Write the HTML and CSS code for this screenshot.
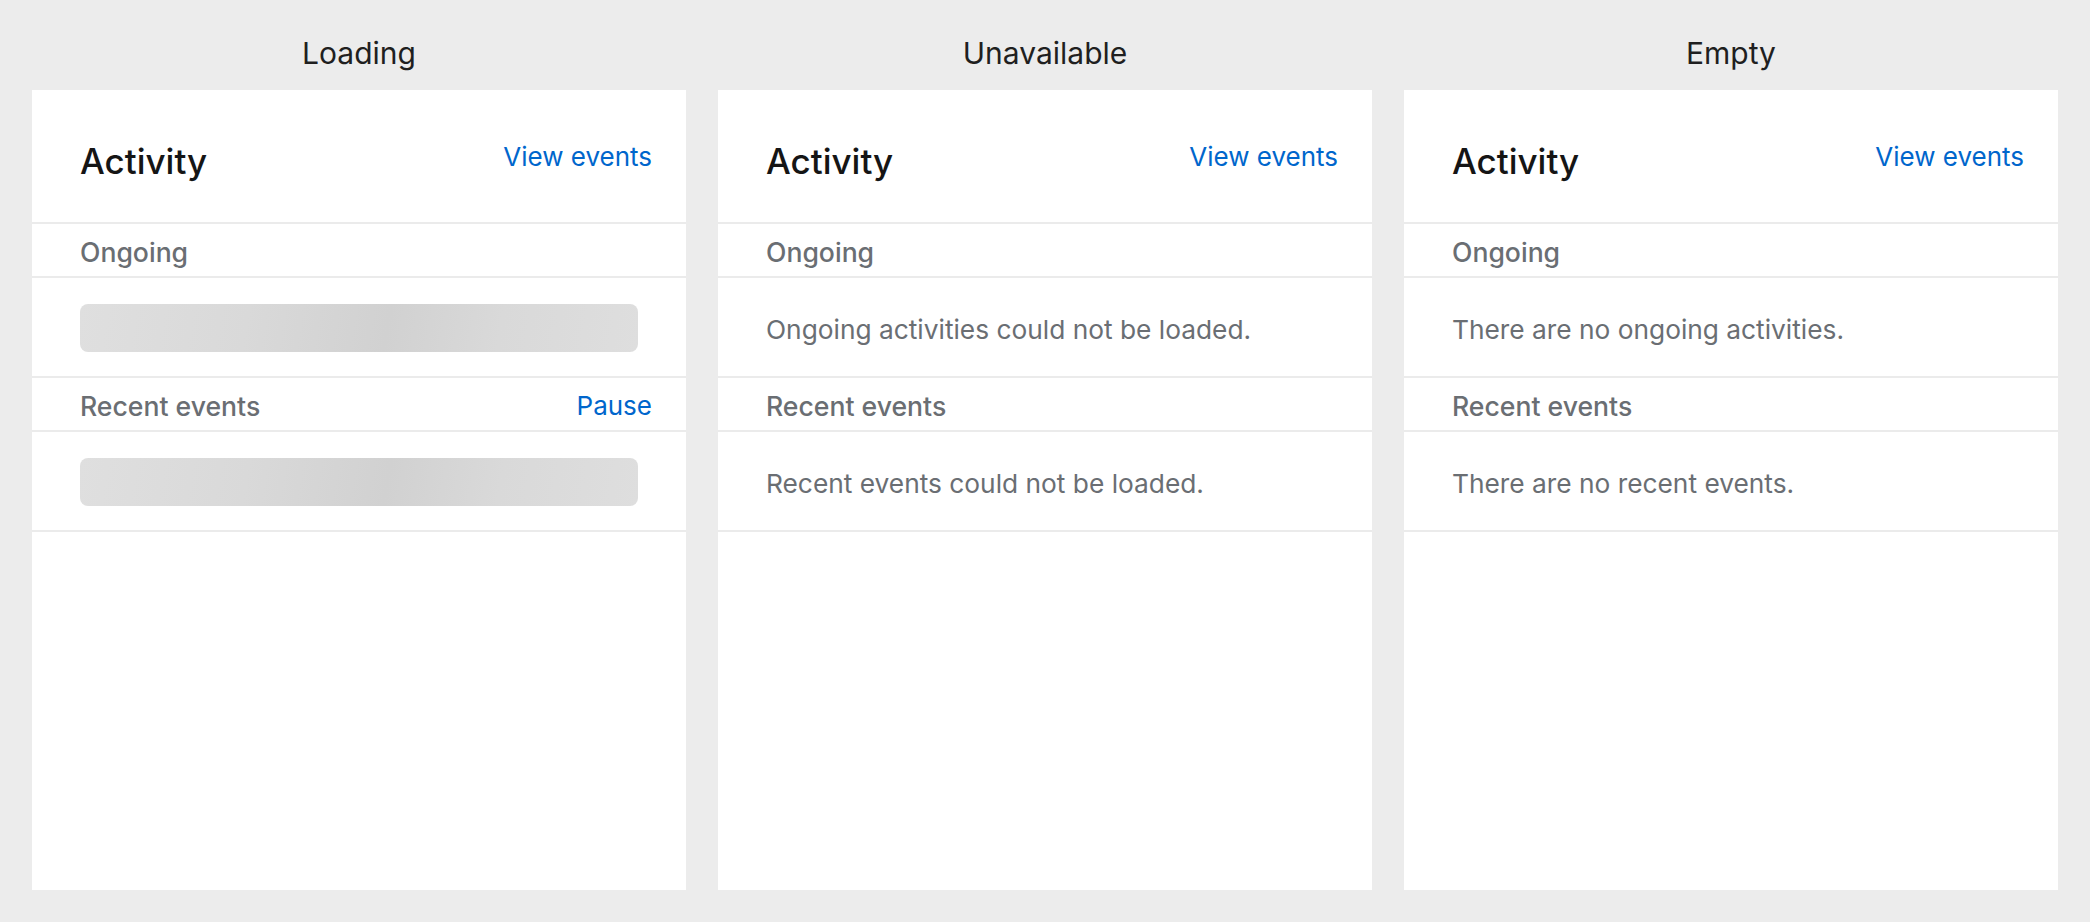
FILE: index.html
```html
<!DOCTYPE html>
<html lang="en">
<head>
<meta charset="utf-8">
<title>Activity card states</title>
<link rel="stylesheet" href="styles.css">
</head>
<body>
<main class="board">
  <section class="column">
    <h2 class="state-title">Loading</h2>
    <div class="card">
      <header class="card-header">
        <h3 class="card-title">Activity</h3>
        <a class="link" href="#">View events</a>
      </header>
      <div class="section-label">
        <span>Ongoing</span>
      </div>
      <div class="section-body skeleton-row">
        <div class="skeleton"></div>
      </div>
      <div class="section-label">
        <span>Recent events</span>
        <a class="link" href="#">Pause</a>
      </div>
      <div class="section-body skeleton-row">
        <div class="skeleton"></div>
      </div>
    </div>
  </section>

  <section class="column">
    <h2 class="state-title">Unavailable</h2>
    <div class="card">
      <header class="card-header">
        <h3 class="card-title">Activity</h3>
        <a class="link" href="#">View events</a>
      </header>
      <div class="section-label">
        <span>Ongoing</span>
      </div>
      <div class="section-body text-row">
        <p class="message">Ongoing activities could not be loaded.</p>
      </div>
      <div class="section-label">
        <span>Recent events</span>
      </div>
      <div class="section-body text-row">
        <p class="message">Recent events could not be loaded.</p>
      </div>
    </div>
  </section>

  <section class="column">
    <h2 class="state-title">Empty</h2>
    <div class="card">
      <header class="card-header">
        <h3 class="card-title">Activity</h3>
        <a class="link" href="#">View events</a>
      </header>
      <div class="section-label">
        <span>Ongoing</span>
      </div>
      <div class="section-body text-row">
        <p class="message">There are no ongoing activities.</p>
      </div>
      <div class="section-label">
        <span>Recent events</span>
      </div>
      <div class="section-body text-row">
        <p class="message">There are no recent events.</p>
      </div>
    </div>
  </section>
</main>
</body>
</html>
```
FILE: styles.css
```css
* {
  box-sizing: border-box;
}

html, body {
  margin: 0;
  height: 100%;
}

body {
  background: #ececec;
  font-family: "Inter", "Noto Sans", sans-serif;
  color: #151515;
}

.board {
  height: 100%;
  padding: 32px;
  display: grid;
  grid-template-columns: repeat(3, 1fr);
  gap: 32px;
}

.column {
  display: flex;
  flex-direction: column;
  min-height: 0;
}

.state-title {
  margin: 0 0 16px;
  height: 42px;
  font-size: 30px;
  line-height: 42px;
  font-weight: 400;
  text-align: center;
  color: #1f1f1f;
}

.card {
  flex: 1;
  background: #ffffff;
  display: flex;
  flex-direction: column;
}

.card-header {
  display: flex;
  justify-content: space-between;
  align-items: flex-start;
  padding: 49px 34px 39px 48px;
  border-bottom: 2px solid #ebebeb;
}

.card-title {
  margin: 0;
  font-size: 35px;
  line-height: 44px;
  font-weight: 500;
  color: #151515;
}

.link {
  font-size: 26px;
  line-height: 34px;
  font-weight: 400;
  color: #0066cc;
  text-decoration: none;
}

.card-header .link {
  margin-top: 1px;
}

.section-label {
  display: flex;
  justify-content: space-between;
  align-items: center;
  padding: 11px 34px 7px 48px;
  border-bottom: 2px solid #ebebeb;
  font-size: 26.6px;
  line-height: 34px;
  font-weight: 500;
  color: #6a6e73;
}

.section-body {
  height: 100px;
  border-bottom: 2px solid #ebebeb;
  padding: 0 48px;
}

.skeleton-row {
  padding-top: 26px;
  padding-bottom: 24px;
}

.skeleton {
  height: 48px;
  border-radius: 8px;
  background: linear-gradient(100deg, #dfdfdf 0%, #d9d9d9 30%, #d1d1d1 55%, #d9d9d9 75%, #dedede 100%);
}

.text-row {
  padding-top: 35px;
}

.message {
  margin: 0;
  font-size: 26.3px;
  line-height: 34px;
  font-weight: 400;
  color: #6a6e73;
}
```
